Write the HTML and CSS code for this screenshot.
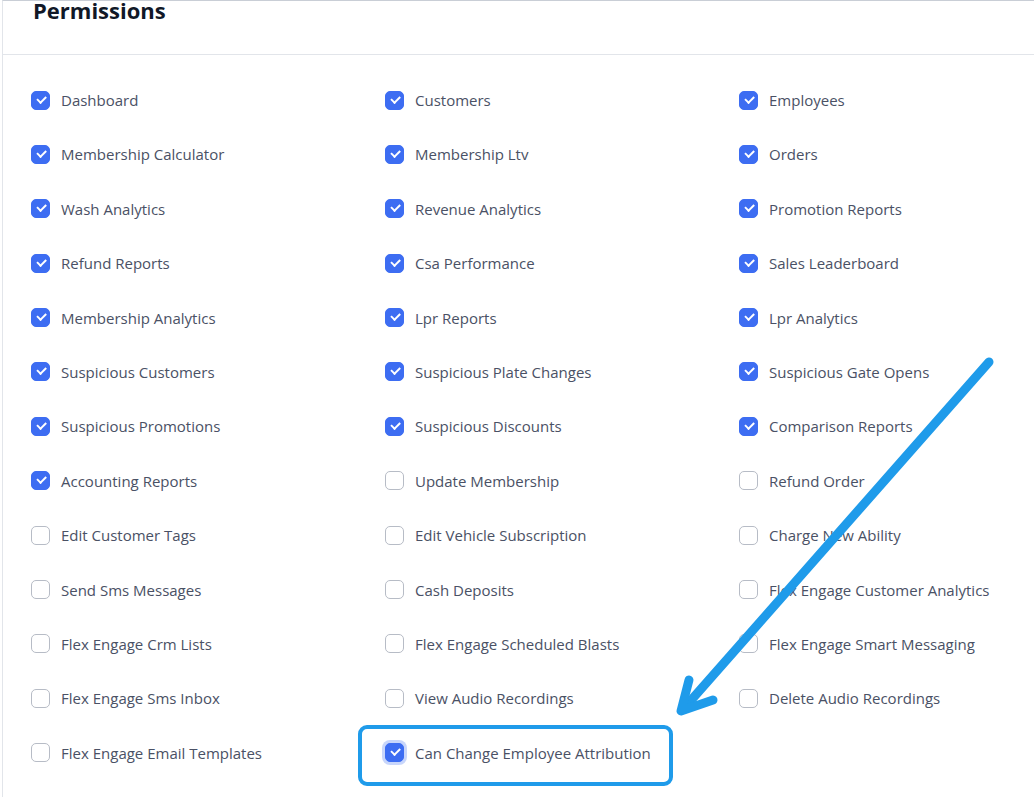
FILE: index.html
```html
<!DOCTYPE html>
<html>
<head>
<meta charset="utf-8">
<link rel="stylesheet" href="styles.css">
</head>
<body>
<div class="card">
  <div class="card-header"><h2>Permissions</h2></div>
  <div class="grid">
    <label class="item"><span class="cb on"></span>Dashboard</label>
    <label class="item"><span class="cb on"></span>Customers</label>
    <label class="item"><span class="cb on"></span>Employees</label>
    <label class="item"><span class="cb on"></span>Membership Calculator</label>
    <label class="item"><span class="cb on"></span>Membership Ltv</label>
    <label class="item"><span class="cb on"></span>Orders</label>
    <label class="item"><span class="cb on"></span>Wash Analytics</label>
    <label class="item"><span class="cb on"></span>Revenue Analytics</label>
    <label class="item"><span class="cb on"></span>Promotion Reports</label>
    <label class="item"><span class="cb on"></span>Refund Reports</label>
    <label class="item"><span class="cb on"></span>Csa Performance</label>
    <label class="item"><span class="cb on"></span>Sales Leaderboard</label>
    <label class="item"><span class="cb on"></span>Membership Analytics</label>
    <label class="item"><span class="cb on"></span>Lpr Reports</label>
    <label class="item"><span class="cb on"></span>Lpr Analytics</label>
    <label class="item"><span class="cb on"></span>Suspicious Customers</label>
    <label class="item"><span class="cb on"></span>Suspicious Plate Changes</label>
    <label class="item"><span class="cb on"></span>Suspicious Gate Opens</label>
    <label class="item"><span class="cb on"></span>Suspicious Promotions</label>
    <label class="item"><span class="cb on"></span>Suspicious Discounts</label>
    <label class="item"><span class="cb on"></span>Comparison Reports</label>
    <label class="item"><span class="cb on"></span>Accounting Reports</label>
    <label class="item"><span class="cb"></span>Update Membership</label>
    <label class="item"><span class="cb"></span>Refund Order</label>
    <label class="item"><span class="cb"></span>Edit Customer Tags</label>
    <label class="item"><span class="cb"></span>Edit Vehicle Subscription</label>
    <label class="item"><span class="cb"></span>Charge New Ability</label>
    <label class="item"><span class="cb"></span>Send Sms Messages</label>
    <label class="item"><span class="cb"></span>Cash Deposits</label>
    <label class="item"><span class="cb"></span>Flex Engage Customer Analytics</label>
    <label class="item"><span class="cb"></span>Flex Engage Crm Lists</label>
    <label class="item"><span class="cb"></span>Flex Engage Scheduled Blasts</label>
    <label class="item"><span class="cb"></span>Flex Engage Smart Messaging</label>
    <label class="item"><span class="cb"></span>Flex Engage Sms Inbox</label>
    <label class="item"><span class="cb"></span>View Audio Recordings</label>
    <label class="item"><span class="cb"></span>Delete Audio Recordings</label>
    <label class="item"><span class="cb"></span>Flex Engage Email Templates</label>
    <label class="item highlight"><span class="cb on focus"></span>Can Change Employee Attribution</label>
  </div>
</div>
<svg class="arrow" width="1034" height="797" viewBox="0 0 1034 797">
  <g fill="none" stroke="#1f9bea" stroke-width="9" stroke-linecap="round" stroke-linejoin="round">
    <line x1="989" y1="362" x2="686" y2="706"/>
    <polyline points="689,680 681,711 713,700"/>
  </g>
</svg>
</body>
</html>
```
FILE: styles.css
```css
html, body {
  margin: 0;
  padding: 0;
  background: #ffffff;
  overflow: hidden;
}
body {
  font-family: "Open Sans", "Noto Sans", "Liberation Sans", sans-serif;
  width: 1034px;
  height: 797px;
  position: relative;
}
.card {
  margin-left: 2px;
  border-left: 1px solid #e2e5ea;
  border-top: 1px solid #c9ced6;
  height: 796px;
}
.card-header {
  height: 53px;
  border-bottom: 1px solid #e2e5ea;
  padding-left: 30px;
  overflow: hidden;
}
.card-header h2 {
  margin: -5px 0 0 0;
  font-size: 22px;
  line-height: 28px;
  font-weight: 700;
  color: #111827;
}
.grid {
  display: grid;
  grid-template-columns: 354px 354px 300px;
  grid-auto-rows: 24px;
  row-gap: 30.4px;
  padding: 33px 0 0 28px;
}
.item {
  display: flex;
  align-items: center;
  gap: 11px;
  font-size: 15px;
  color: #4a5165;
  white-space: nowrap;
  position: relative;
}
.cb {
  width: 19px;
  height: 19px;
  box-sizing: border-box;
  border: 1px solid #b7bcc6;
  border-radius: 5px;
  background: #fff;
  flex: none;
  position: relative;
}
.cb.on {
  background: #3d6df2;
  border-color: #3d6df2;
}
.cb.on::after {
  content: "";
  position: absolute;
  left: 4.5px;
  top: 4px;
  width: 6.5px;
  height: 3.5px;
  border-left: 2.4px solid #fff;
  border-bottom: 2.4px solid #fff;
  transform: rotate(-45deg);
}
.cb.focus {
  box-shadow: 0 0 0 3px #c8d6fb;
}
.highlight::before {
  content: "";
  position: absolute;
  left: -27px;
  top: -16px;
  width: 315px;
  height: 61px;
  box-sizing: border-box;
  border: 4.5px solid #1f9bea;
  border-radius: 9px;
}
.arrow {
  position: absolute;
  left: 0;
  top: 0;
  pointer-events: none;
}
```
